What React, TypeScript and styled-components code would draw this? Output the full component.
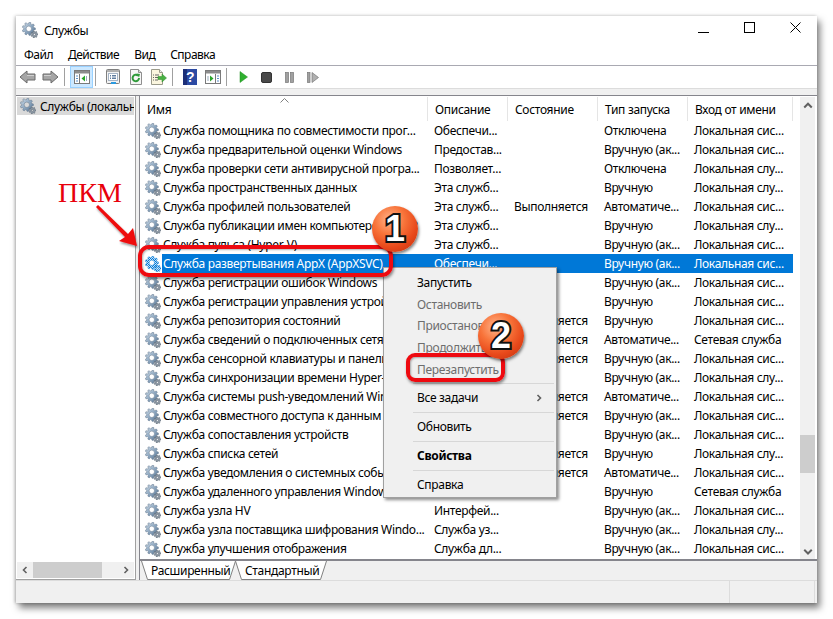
import { useId } from 'react';
import styled, { createGlobalStyle } from 'styled-components';

const GlobalStyle = createGlobalStyle`
  html, body {
    margin: 0;
    height: 619px;
    overflow: hidden;
    background: #fff;
    font-family: "Noto Sans", "Open Sans", sans-serif;
    font-size: 12px;
    letter-spacing: -0.32px;
    color: #000;
  }
`;

const Page = styled.div`
  position: relative;
  width: 833px;
  height: 619px;
  padding: 16px;
  box-sizing: border-box;
`;

const Window = styled.div`
  width: 801px;
  height: 587px;
  display: flex;
  flex-direction: column;
  background: #f0f0f0;
  box-shadow: 3px 5px 7px rgba(0, 0, 0, 0.5), -1px 0 3px rgba(0, 0, 0, 0.25);
`;

const TitleBar = styled.div`
  height: 28px;
  flex: none;
  display: flex;
  align-items: center;
  background: #fff;
  padding-left: 6px;
`;

const TitleText = styled.span`
  flex: 1;
  font-size: 12px;
  padding: 1px 0 0 6px;
`;

const WindowButton = styled.div`
  width: 46px;
  height: 28px;
  display: flex;
  align-items: center;
  justify-content: center;
  margin-top: -5px;
  position: relative;
  left: 1px;
`;

const MenuBar = styled.div`
  height: 21px;
  flex: none;
  display: flex;
  align-items: center;
  gap: 15px;
  padding-left: 8px;
  letter-spacing: -0.5px;
  background: #fff;
  border-bottom: 1px solid #a9a9b2;
`;

const Toolbar = styled.div`
  height: 22px;
  flex: none;
  display: flex;
  align-items: center;
  background: #fff;
  border-bottom: 1px solid #dcdcdc;
`;

const ToolButton = styled.div<{ $active?: boolean }>`
  width: 23px;
  height: 22px;
  box-sizing: border-box;
  display: flex;
  align-items: center;
  justify-content: center;
  background: ${(p) => (p.$active ? '#cce8ff' : 'transparent')};
  border: 1px solid ${(p) => (p.$active ? '#99d1ff' : 'transparent')};
`;

const ToolSeparator = styled.div`
  width: 1px;
  height: 18px;
  margin: 0 5px 0 2px;
  background: #a0a0a0;
`;

const Band = styled.div`
  height: 6px;
  flex: none;
`;

const Main = styled.div`
  flex: 1;
  min-height: 0;
  display: flex;
  border-top: 1px solid #85858c;
`;

const TreePane = styled.div`
  width: 120px;
  flex: none;
  box-sizing: border-box;
  display: flex;
  flex-direction: column;
  background: #fff;
  border-right: 1px solid #a0a0a0;
  border-bottom: 1px solid #a0a0a0;
  padding: 1px 0 1px 1px;
`;

const TreeItem = styled.div`
  height: 18px;
  display: flex;
  align-items: center;
  gap: 4px;
  padding-left: 3px;
  background: #d9d9d9;
  white-space: nowrap;
  overflow: hidden;
  margin-right: 1px;
  svg {
    flex: none;
  }
`;

const TreeFill = styled.div`
  flex: 1;
`;

const HScroll = styled.div`
  height: 16px;
  display: flex;
  align-items: center;
  background: #f0f0f0;
  margin-right: 1px;
`;

const HThumb = styled.div`
  width: 69px;
  height: 16px;
  background: #cdcdcd;
`;

const ArrowBox = styled.div`
  width: 16px;
  height: 16px;
  flex: none;
  display: flex;
  align-items: center;
  justify-content: center;
`;

const HSpacer = styled.div`
  flex: 1;
`;

const PaneGap = styled.div`
  width: 3px;
  flex: none;
`;

const ListPane = styled.div`
  flex: 1;
  min-width: 0;
  display: flex;
  flex-direction: column;
  border-left: 1px solid #85858c;
`;

const ListArea = styled.div`
  flex: 1;
  min-height: 0;
  display: flex;
  background: #fff;
  border-bottom: 2px solid #85858c;
`;

const ListContent = styled.div`
  width: 653px;
  flex: none;
  overflow: hidden;
  display: flex;
  flex-direction: column;
`;

const Header = styled.div`
  height: 25px;
  flex: none;
  display: flex;
  position: relative;
`;

const HeaderCell = styled.div<{ $w: number }>`
  width: ${(p) => p.$w}px;
  flex: none;
  box-sizing: border-box;
  height: 24px;
  margin-top: 1px;
  padding: 1px 0 0 7px;
  display: flex;
  align-items: center;
  border-right: 1px solid #e5e5e5;
`;

const SortCaret = styled.svg`
  position: absolute;
  left: 140px;
  top: 2px;
`;

const Row = styled.div`
  height: 19px;
  flex: none;
  display: flex;
  align-items: center;
`;

const RowIcon = styled.div`
  width: 22px;
  flex: none;
  padding-left: 5px;
  box-sizing: border-box;
  display: flex;
`;

const RowBody = styled.div<{ $selected?: boolean }>`
  display: flex;
  height: 19px;
  align-items: center;
  background: ${(p) => (p.$selected ? '#0078d7' : 'transparent')};
  color: ${(p) => (p.$selected ? '#fff' : '#000')};
`;

const Cell = styled.div<{ $w: number; $pad: number }>`
  width: ${(p) => p.$w}px;
  padding-left: ${(p) => p.$pad}px;
  box-sizing: border-box;
  flex: none;
  white-space: nowrap;
  overflow: hidden;
`;

const VScroll = styled.div`
  width: 15px;
  margin: 1px 2px 0 7px;
  flex: none;
  background: #f0f0f0;
  display: flex;
  flex-direction: column;
  align-items: center;
`;

const VThumb = styled.div`
  width: 15px;
  height: 38px;
  margin-top: 322px;
  background: #cdcdcd;
`;

const TabStrip = styled.div`
  height: 19px;
  flex: none;
  display: flex;
  padding-left: 1px;
`;

const Tab = styled.div<{ $w: number; $pad: number; $ml?: number }>`
  position: relative;
  width: ${(p) => p.$w}px;
  height: 19px;
  padding-left: ${(p) => p.$pad}px;
  margin-left: ${(p) => p.$ml ?? 0}px;
  box-sizing: border-box;
  display: flex;
  align-items: center;
  span {
    position: relative;
  }
  svg {
    position: absolute;
    left: 0;
    top: 0;
  }
`;

const StatusBar = styled.div`
  height: 22px;
  flex: none;
  display: flex;
  border-top: 1px solid #dcdcdc;
`;

const StatusCell = styled.div<{ $w: number }>`
  width: ${(p) => p.$w}px;
  box-sizing: border-box;
  border-right: 1px solid #dcdcdc;
  flex: none;
`;

const ContextMenu = styled.div`
  position: absolute;
  left: 383px;
  top: 267px;
  width: 174px;
  height: 231px;
  box-sizing: border-box;
  padding: 4px 2px 0;
  background: #f0f0f0;
  border: 1px solid #a0a0a0;
  box-shadow: 2px 2px 3px rgba(0, 0, 0, 0.45);
`;

const MenuItem = styled.div<{ $disabled?: boolean; $bold?: boolean; $h: number }>`
  height: ${(p) => p.$h}px;
  display: flex;
  align-items: center;
  justify-content: space-between;
  padding: 0 11px 0 31px;
  color: ${(p) => (p.$disabled ? '#6d6d6d' : '#000')};
  font-weight: ${(p) => (p.$bold ? 700 : 400)};
`;

const MenuSeparator = styled.div<{ $top: number }>`
  height: 1px;
  margin: ${(p) => p.$top}px 0 4px 27px;
  background: #d7d7d7;
`;

const Frame = styled.div`
  position: absolute;
  box-sizing: border-box;
  border: 4px solid #ee0a10;
  box-shadow: 1px 2px 3px rgba(0, 0, 0, 0.45), inset 1px 1px 2px rgba(0, 0, 0, 0.3);
`;

const ServiceFrame = styled(Frame)`
  left: 138px;
  top: 245px;
  width: 255px;
  height: 32px;
  border-radius: 11px;
`;

const RestartFrame = styled(Frame)`
  left: 406px;
  top: 353px;
  width: 99px;
  height: 29px;
  border-radius: 9px;
`;

const Callout = styled.div`
  position: absolute;
  width: 46px;
  height: 46px;
  border-radius: 50%;
  display: flex;
  align-items: center;
  justify-content: center;
  background: radial-gradient(circle at 38% 30%, #ffb48c 0%, #f8743a 35%, #e8481a 65%, #b8300e 100%);
  box-shadow: 1px 2px 3px rgba(0, 0, 0, 0.5);
  font-family: "Liberation Sans", sans-serif;
  font-weight: 700;
  font-size: 36px;
  letter-spacing: 0;
  color: #fff;
  -webkit-text-stroke: 4px #111;
  paint-order: stroke fill;
`;

const CalloutOne = styled(Callout)`
  left: 372px;
  top: 206px;
`;

const CalloutTwo = styled(Callout)`
  left: 478px;
  top: 313px;
`;

const RmbLabel = styled.div`
  position: absolute;
  left: 58px;
  top: 177px;
  font-family: "Liberation Serif", serif;
  font-size: 28px;
  letter-spacing: 0;
  line-height: 31px;
  color: #e8000c;
`;

const ArrowOverlay = styled.svg`
  position: absolute;
  left: 90px;
  top: 200px;
`;

const teethPath = (cx: number, cy: number, ro: number, ri: number, hole: number, teeth: number) => {
  const pts: string[] = [];
  const step = (Math.PI * 2) / teeth;
  for (let i = 0; i < teeth; i++) {
    const a = i * step;
    const ang = [a - step * 0.36, a - step * 0.18, a + step * 0.18, a + step * 0.36];
    const rad = [ri, ro, ro, ri];
    ang.forEach((t, k) => {
      pts.push(`${(cx + rad[k] * Math.cos(t)).toFixed(2)} ${(cy + rad[k] * Math.sin(t)).toFixed(2)}`);
    });
  }
  return `M${pts.join('L')}Z M${cx - hole} ${cy}a${hole} ${hole} 0 1 0 ${hole * 2} 0a${hole} ${hole} 0 1 0 ${-hole * 2} 0Z`;
};

const bigGear = teethPath(6.8, 6.8, 6.6, 5, 2.7, 9);
const smallGear = teethPath(12.4, 12.4, 3.5, 2.5, 1, 7);

function Gear({ selected }: { selected?: boolean }) {
  const id = useId();
  return (
    <svg width="16" height="16" viewBox="0 0 16 16">
      <defs>
        <linearGradient id={`${id}a`} x1="0" y1="0" x2="1" y2="1">
          <stop offset="0" stopColor="#d3dfea" />
          <stop offset="0.5" stopColor="#8fa9c2" />
          <stop offset="1" stopColor="#54718f" />
        </linearGradient>
        <pattern id={`${id}p`} width="2" height="2" patternUnits="userSpaceOnUse">
          <rect width="2" height="2" fill="#0078d7" />
          <rect width="1" height="1" fill="#cfe6f8" />
          <rect x="1" y="1" width="1" height="1" fill="#cfe6f8" />
        </pattern>
      </defs>
      <path d={bigGear} fillRule="evenodd" fill={selected ? `url(#${id}p)` : `url(#${id}a)`} stroke={selected ? '#0078d7' : '#5f7388'} strokeWidth="0.5" />
      <path d={smallGear} fillRule="evenodd" fill={selected ? `url(#${id}p)` : '#8d99a6'} stroke={selected ? '#0078d7' : '#56626e'} strokeWidth="0.5" />
    </svg>
  );
}

function NavArrow({ flip }: { flip?: boolean }) {
  return (
    <svg width="17" height="14" viewBox="0 0 17 14">
      <polygon
        points={flip ? '16,7 9,1 9,4 1,4 1,10 9,10 9,13' : '1,7 8,1 8,4 16,4 16,10 8,10 8,13'}
        fill="#a6a6a6"
        stroke="#6a6a6a"
        strokeWidth="1"
      />
      <rect x={flip ? 2 : 8} y="5" width="7" height="1" fill="#d0d0d0" />
    </svg>
  );
}

function ConsoleTree() {
  return (
    <svg width="16" height="14" viewBox="0 0 16 14">
      <rect x="0.5" y="0.5" width="15" height="13" fill="#fff" stroke="#7a7a7a" />
      <rect x="1" y="1" width="14" height="2.5" fill="#8c8c8c" />
      <path d="M5.5 4v9" stroke="#7a7a7a" />
      <path d="M2 6h2M2 8.5h2M2 11h2" stroke="#5b8fc9" />
      <polygon points="11,5.5 11,11.5 7.5,8.5" fill="#2aa52a" />
      <path d="M12.5 6v5" stroke="#9ab" />
    </svg>
  );
}

function PropertiesIcon() {
  return (
    <svg width="16" height="16" viewBox="0 0 16 16">
      <rect x="1.5" y="0.5" width="13" height="14" rx="1" fill="#f2f2f2" stroke="#7f7f7f" />
      <rect x="2" y="1" width="12" height="2" fill="#b0b0b0" />
      <rect x="3.5" y="4.5" width="9" height="7" fill="#fff" stroke="#a5b4c6" />
      <path d="M5 6.5h1M7 6.5h4M5 8h1M7 8h4M5 9.5h1M7 9.5h4" stroke="#5f7da0" />
      <rect x="6" y="13" width="5" height="2" fill="#2b9ae0" />
    </svg>
  );
}

function RefreshIcon() {
  return (
    <svg width="14" height="16" viewBox="0 0 14 16">
      <path d="M1.5.5h8l3 3v12h-11z" fill="#f6f6f6" stroke="#8f8f8f" />
      <path d="M9.5.5v3h3" fill="#ddd" stroke="#8f8f8f" />
      <path d="M10 9a3.2 3.2 0 1 1-1-2.3" fill="none" stroke="#2f9a3a" strokeWidth="2" />
      <polygon points="7.5,4.5 11,5 10,8.5" fill="#2f9a3a" />
    </svg>
  );
}

function ExportIcon() {
  return (
    <svg width="17" height="16" viewBox="0 0 17 16">
      <path d="M1.5.5h8l3 3v12h-11z" fill="#fbf6df" stroke="#9a9a8a" />
      <path d="M9.5.5v3h3" fill="#eee" stroke="#9a9a8a" />
      <path d="M3 6h1M5 6h4M3 8.5h1M5 8.5h3M3 11h1M5 11h3" stroke="#666" />
      <polygon points="8,7.5 12,7.5 12,5 16.5,9 12,13 12,10.5 8,10.5" fill="#49b043" stroke="#2e8b2e" strokeWidth="0.5" />
    </svg>
  );
}

function HelpIcon() {
  return (
    <svg width="14" height="16" viewBox="0 0 14 16">
      <rect width="14" height="16" fill="#2c4aa3" />
      <rect width="4" height="16" fill="#1c2f78" />
      <text x="7" y="13" textAnchor="middle" fontFamily="Liberation Sans" fontWeight="700" fontSize="14" fill="#fff">
        ?
      </text>
    </svg>
  );
}

function ConsoleAction() {
  return (
    <svg width="16" height="14" viewBox="0 0 16 14">
      <rect x="0.5" y="0.5" width="15" height="13" fill="#fff" stroke="#7a7a7a" />
      <rect x="1" y="1" width="14" height="2.5" fill="#8c8c8c" />
      <path d="M10.5 4v9" stroke="#7a7a7a" />
      <path d="M12 6h2M12 8.5h2M12 11h2" stroke="#5b8fc9" />
      <polygon points="5,5.5 5,11.5 8.5,8.5" fill="#2aa52a" />
      <path d="M3 6v5" stroke="#9ab" />
    </svg>
  );
}

function PlayIcon() {
  return (
    <svg width="9" height="12" viewBox="0 0 9 12">
      <polygon points="1,0.5 8.5,6 1,11.5" fill="#2fb02f" stroke="#1f8f1f" strokeWidth="0.5" />
    </svg>
  );
}

function StopIcon() {
  return (
    <svg width="11" height="11" viewBox="0 0 11 11">
      <rect x="0.5" y="0.5" width="10" height="10" rx="1.5" fill="#4a4a4a" stroke="#333" />
    </svg>
  );
}

function PauseIcon() {
  return (
    <svg width="9" height="11" viewBox="0 0 9 11">
      <rect x="0.5" y="0.5" width="3" height="10" fill="#a0a0a0" stroke="#777" strokeWidth="0.7" />
      <rect x="5.5" y="0.5" width="3" height="10" fill="#a0a0a0" stroke="#777" strokeWidth="0.7" />
    </svg>
  );
}

function ResumeIcon() {
  return (
    <svg width="12" height="11" viewBox="0 0 12 11">
      <rect x="0.5" y="0.5" width="2.5" height="10" fill="#a0a0a0" stroke="#777" strokeWidth="0.7" />
      <polygon points="5,0.5 11.5,5.5 5,10.5" fill="#b0b0b0" stroke="#777" strokeWidth="0.7" />
    </svg>
  );
}

function Chevron({ dir, size = 8 }: { dir: 'up' | 'down' | 'left' | 'right'; size?: number }) {
  const d = {
    up: 'M1 6l3-3 3 3',
    down: 'M1 3l3 3 3-3',
    left: 'M5.5 1l-3 3 3 3',
    right: 'M2.5 1l3 3-3 3',
  }[dir];
  return (
    <svg width={size} height={size} viewBox="0 0 8 8">
      <path d={d} fill="none" stroke="#606060" strokeWidth="1.6" />
    </svg>
  );
}

const AUTO = 'Автоматиче...';
const MANUAL = 'Вручную';
const TRIGGER = 'Вручную (ак...';
const OFF = 'Отключена';
const SYS = 'Локальная сис...';
const SVC = 'Локальная слу...';
const NET = 'Сетевая служба';
const RUN = 'Выполняется';
const THIS = 'Эта служб...';

const rows: [string, string, string, string, string][] = [
  ['Служба помощника по совместимости прог...', 'Обеспечи...', '', OFF, SYS],
  ['Служба предварительной оценки Windows', 'Предостав...', '', TRIGGER, SYS],
  ['Служба проверки сети антивирусной програ...', 'Позволяет...', '', OFF, SVC],
  ['Служба пространственных данных', THIS, '', MANUAL, SVC],
  ['Служба профилей пользователей', THIS, RUN, AUTO, SYS],
  ['Служба публикации имен компьютеров PNRP', THIS, '', MANUAL, SVC],
  ['Служба пульса (Hyper-V)', THIS, '', TRIGGER, SYS],
  ['Служба развертывания AppX (AppXSVC)', 'Обеспечи...', '', TRIGGER, SYS],
  ['Служба регистрации ошибок Windows', '', '', TRIGGER, SYS],
  ['Служба регистрации управления устройством', '', '', MANUAL, SYS],
  ['Служба репозитория состояний', '', RUN, MANUAL, SYS],
  ['Служба сведений о подключенных сетях', '', RUN, AUTO, NET],
  ['Служба сенсорной клавиатуры и панели рук...', '', RUN, TRIGGER, SYS],
  ['Служба синхронизации времени Hyper-V', '', '', TRIGGER, SVC],
  ['Служба системы push-уведомлений Windows', '', RUN, AUTO, SYS],
  ['Служба совместного доступа к данным', '', RUN, TRIGGER, SYS],
  ['Служба сопоставления устройств', '', '', TRIGGER, SYS],
  ['Служба списка сетей', '', RUN, MANUAL, SVC],
  ['Служба уведомления о системных событиях', '', RUN, AUTO, SYS],
  ['Служба удаленного управления Windows (W...', '', '', MANUAL, NET],
  ['Служба узла HV', 'Интерфей...', '', TRIGGER, SYS],
  ['Служба узла поставщика шифрования Windo...', 'Служба уз...', '', TRIGGER, SVC],
  ['Служба улучшения отображения', 'Служба дл...', '', TRIGGER, SYS],
  ['', '', '', '', ''],
];

const SELECTED = 7;

export default function App() {
  return (
    <Page>
      <GlobalStyle />
      <Window>
        <TitleBar>
          <Gear />
          <TitleText>Службы</TitleText>
          <WindowButton>
            <svg width="11" height="11" viewBox="0 0 11 11">
              <path d="M0 10.5h11" stroke="#000" />
            </svg>
          </WindowButton>
          <WindowButton>
            <svg width="11" height="11" viewBox="0 0 11 11">
              <rect x="0.5" y="0.5" width="10" height="10" fill="none" stroke="#000" />
            </svg>
          </WindowButton>
          <WindowButton>
            <svg width="11" height="11" viewBox="0 0 11 11">
              <path d="M0.5 0.5l10 10M10.5 0.5l-10 10" stroke="#000" />
            </svg>
          </WindowButton>
        </TitleBar>
        <MenuBar>
          <span>Файл</span>
          <span>Действие</span>
          <span>Вид</span>
          <span>Справка</span>
        </MenuBar>
        <Toolbar>
          <ToolButton>
            <NavArrow />
          </ToolButton>
          <ToolButton>
            <NavArrow flip />
          </ToolButton>
          <ToolSeparator />
          <ToolButton $active>
            <ConsoleTree />
          </ToolButton>
          <ToolSeparator />
          <ToolButton>
            <PropertiesIcon />
          </ToolButton>
          <ToolButton>
            <RefreshIcon />
          </ToolButton>
          <ToolButton>
            <ExportIcon />
          </ToolButton>
          <ToolSeparator />
          <ToolButton>
            <HelpIcon />
          </ToolButton>
          <ToolButton>
            <ConsoleAction />
          </ToolButton>
          <ToolSeparator />
          <ToolButton>
            <PlayIcon />
          </ToolButton>
          <ToolButton>
            <StopIcon />
          </ToolButton>
          <ToolButton>
            <PauseIcon />
          </ToolButton>
          <ToolButton>
            <ResumeIcon />
          </ToolButton>
        </Toolbar>
        <Band />
        <Main>
          <TreePane>
            <TreeItem>
              <Gear />
              <span>Службы (локальные)</span>
            </TreeItem>
            <TreeFill />
            <HScroll>
              <ArrowBox>
                <Chevron dir="left" />
              </ArrowBox>
              <HThumb />
              <HSpacer />
              <ArrowBox>
                <Chevron dir="right" />
              </ArrowBox>
            </HScroll>
          </TreePane>
          <PaneGap />
          <ListPane>
            <ListArea>
              <ListContent>
                <Header>
                  <HeaderCell $w={288}>Имя</HeaderCell>
                  <HeaderCell $w={80}>Описание</HeaderCell>
                  <HeaderCell $w={90}>Состояние</HeaderCell>
                  <HeaderCell $w={90}>Тип запуска</HeaderCell>
                  <HeaderCell $w={105}>Вход от имени</HeaderCell>
                  <SortCaret width="9" height="5" viewBox="0 0 9 5">
                    <path d="M0.5 4.5l4-4 4 4" fill="none" stroke="#808080" />
                  </SortCaret>
                </Header>
                {rows.map((row, i) => (
                  <Row key={i}>
                    <RowIcon>
                      <Gear selected={i === SELECTED} />
                    </RowIcon>
                    <RowBody $selected={i === SELECTED}>
                      <Cell $w={266} $pad={1}>{row[0]}</Cell>
                      <Cell $w={80} $pad={6}>{row[1]}</Cell>
                      <Cell $w={90} $pad={6}>{row[2]}</Cell>
                      <Cell $w={90} $pad={6}>{row[3]}</Cell>
                      <Cell $w={105} $pad={6}>{row[4]}</Cell>
                    </RowBody>
                  </Row>
                ))}
              </ListContent>
              <VScroll>
                <ArrowBox>
                  <Chevron dir="up" size={10} />
                </ArrowBox>
                <VThumb />
                <HSpacer />
                <ArrowBox>
                  <Chevron dir="down" size={10} />
                </ArrowBox>
              </VScroll>
            </ListArea>
            <TabStrip>
              <Tab $w={95} $pad={10}>
                <svg width="95" height="19" viewBox="0 0 95 19">
                  <path d="M0.5 0L6.5 18.5H88.5L94.5 0" fill="#fff" stroke="#808080" />
                </svg>
                <span>Расширенный</span>
              </Tab>
              <Tab $w={92} $pad={10} $ml={-1}>
                <svg width="92" height="19" viewBox="0 0 92 19">
                  <path d="M0.5 0L6.5 18.5H85.5L91.5 0" fill="#fff" stroke="#808080" />
                </svg>
                <span>Стандартный</span>
              </Tab>
            </TabStrip>
          </ListPane>
        </Main>
        <StatusBar>
          <StatusCell $w={714} />
          <StatusCell $w={85} />
        </StatusBar>
      </Window>

      <RmbLabel>ПКМ</RmbLabel>
      <ArrowOverlay width="50" height="50" viewBox="0 0 50 50">
        <defs>
          <filter id="arrowShadow" x="-20%" y="-20%" width="150%" height="150%">
            <feDropShadow dx="1" dy="2" stdDeviation="1" floodOpacity="0.4" />
          </filter>
        </defs>
        <polygon
          points="6,7 8,5 38,34 43,28 47,46 29,41 35,37"
          fill="#ee0a10"
          filter="url(#arrowShadow)"
        />
      </ArrowOverlay>

      <ContextMenu>
        <MenuItem $h={21.6}>Запустить</MenuItem>
        <MenuItem $h={21.6} $disabled>Остановить</MenuItem>
        <MenuItem $h={21.6} $disabled>Приостановить</MenuItem>
        <MenuItem $h={21.6} $disabled>Продолжить</MenuItem>
        <MenuItem $h={21.6} $disabled>Перезапустить</MenuItem>
        <MenuSeparator $top={3} />
        <MenuItem $h={20}>
          <span>Все задачи</span>
          <Chevron dir="right" />
        </MenuItem>
        <MenuSeparator $top={4} />
        <MenuItem $h={20}>Обновить</MenuItem>
        <MenuSeparator $top={4} />
        <MenuItem $h={20} $bold>Свойства</MenuItem>
        <MenuSeparator $top={4} />
        <MenuItem $h={20}>Справка</MenuItem>
      </ContextMenu>

      <ServiceFrame />
      <RestartFrame />
      <CalloutOne>1</CalloutOne>
      <CalloutTwo>2</CalloutTwo>
    </Page>
  );
}
